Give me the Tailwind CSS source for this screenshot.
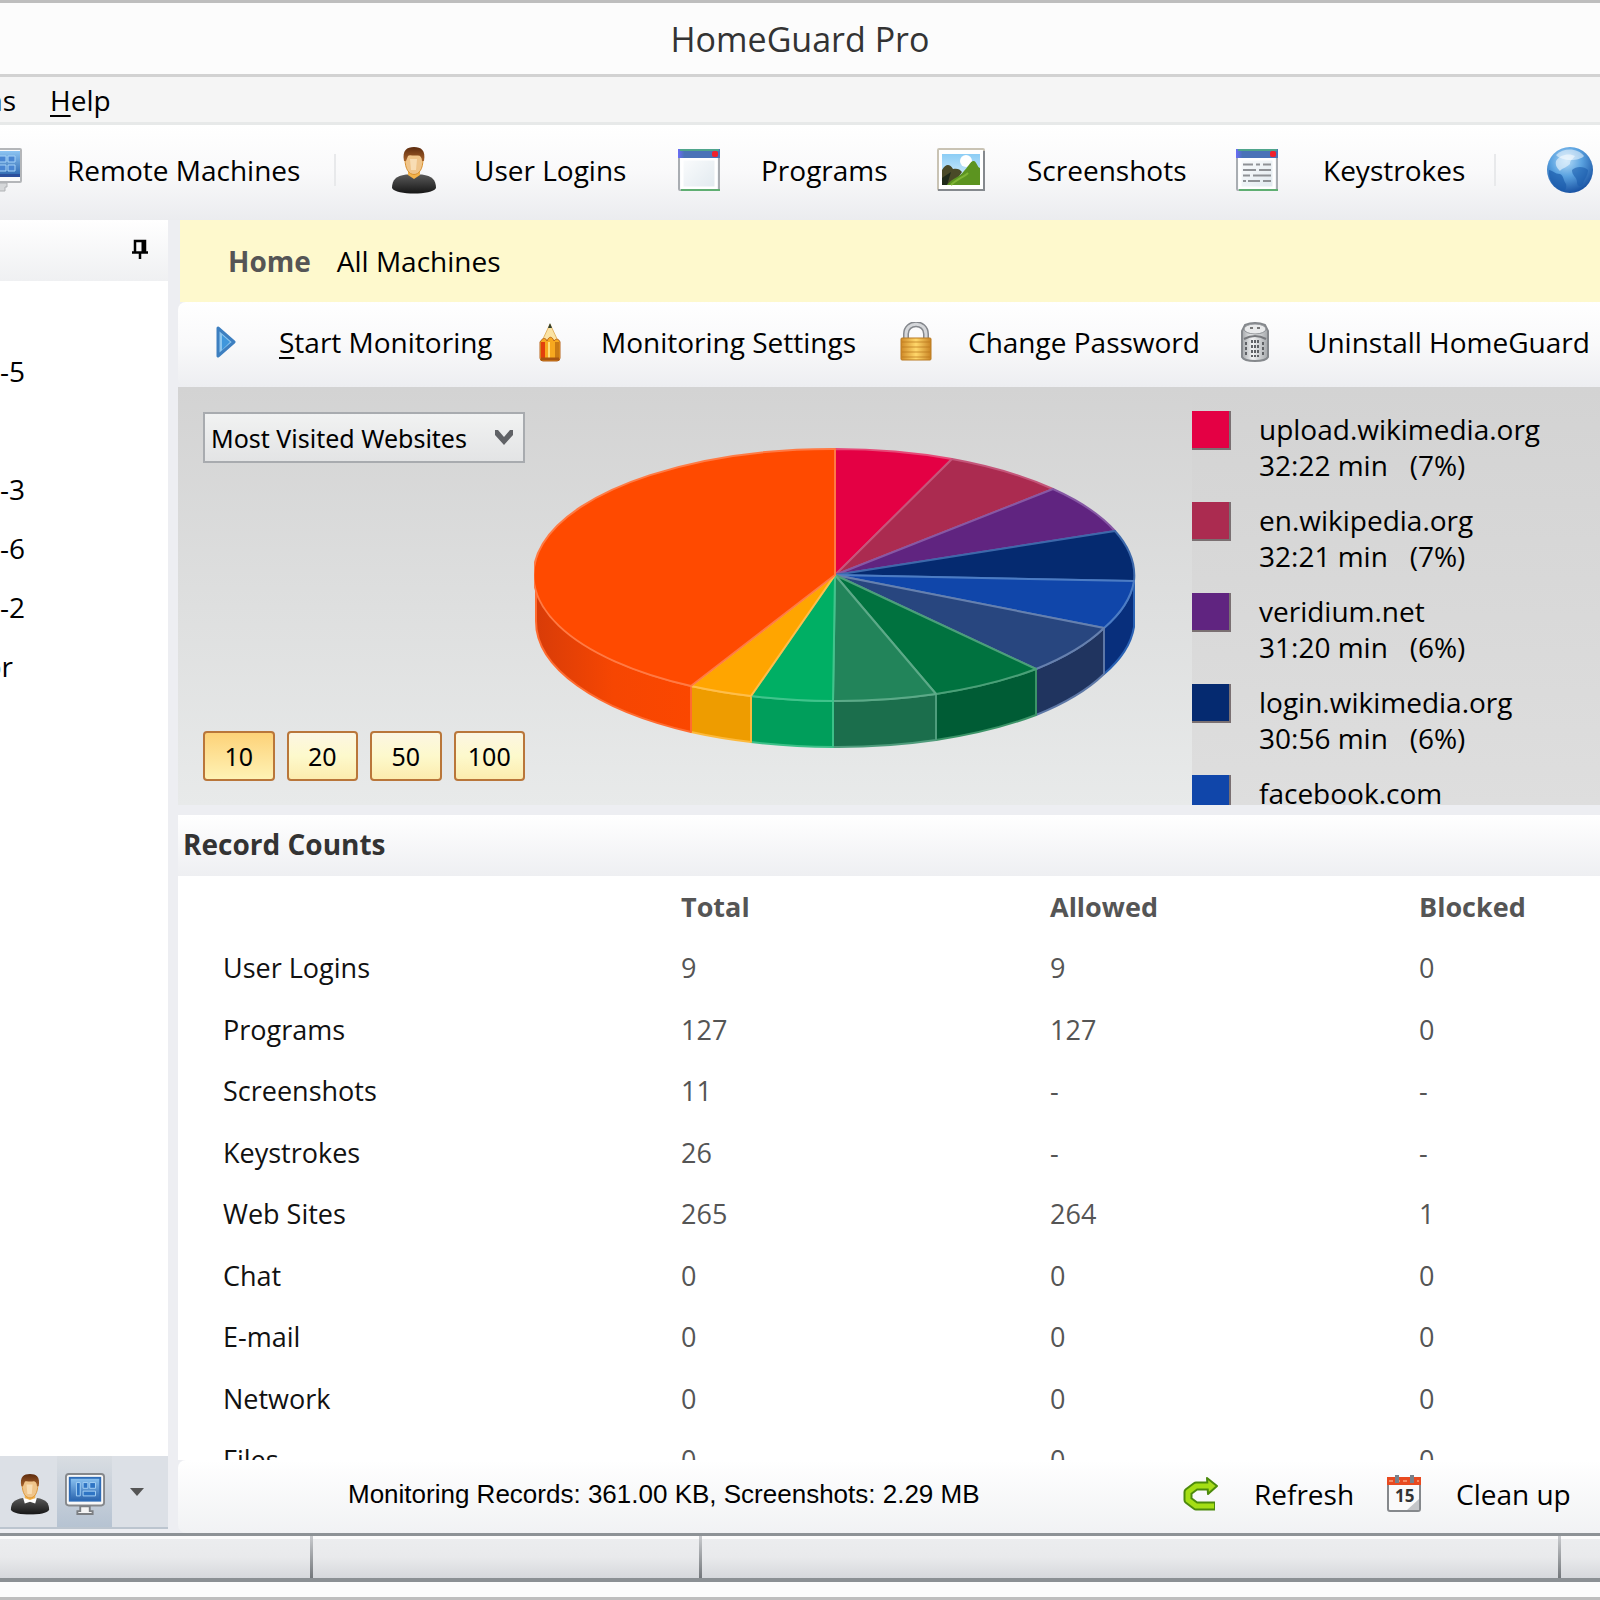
<!DOCTYPE html>
<html lang="en">
  <head>
    <meta charset="UTF-8" />
    <meta name="viewport" content="width=device-width, initial-scale=1.0" />
    <title>HomeGuard Pro</title>
    <script src="https://cdn.jsdelivr.net/npm/@tailwindcss/browser@4"></script>
  </head>
  <body class="bg-[#fcfcfc]">
    <!-- Shared icon shapes -->
    <svg class="absolute size-0" aria-hidden="true">
      <defs>
        <linearGradient id="hair" x1="0" y1="0" x2="0" y2="1">
          <stop offset="0" stop-color="#5c2b0e" />
          <stop offset="1" stop-color="#a8622a" />
        </linearGradient>
        <linearGradient id="suit" x1="0" y1="0" x2="0" y2="1">
          <stop offset="0" stop-color="#5a5a5a" />
          <stop offset="1" stop-color="#161616" />
        </linearGradient>
        <linearGradient id="screen" x1="0" y1="0" x2="0" y2="1">
          <stop offset="0" stop-color="#8cc4f2" />
          <stop offset="1" stop-color="#2a64ae" />
        </linearGradient>
        <linearGradient id="paper" x1="0" y1="0" x2="1" y2="1">
          <stop offset="0" stop-color="#ffffff" />
          <stop offset="1" stop-color="#dfe8ee" />
        </linearGradient>
        <linearGradient id="titlebar" x1="0" y1="0" x2="1" y2="0">
          <stop offset="0" stop-color="#6a6cf6" />
          <stop offset="0.15" stop-color="#4a72b8" />
          <stop offset="1" stop-color="#4a72b8" />
        </linearGradient>
        <radialGradient id="globe" cx="0.42" cy="0.3" r="0.75">
          <stop offset="0" stop-color="#b5dcf8" />
          <stop offset="0.45" stop-color="#5aa2e0" />
          <stop offset="1" stop-color="#11499c" />
        </radialGradient>
        <linearGradient id="gold" x1="0" y1="0" x2="1" y2="0">
          <stop offset="0" stop-color="#d08a28" />
          <stop offset="0.5" stop-color="#ffd76a" />
          <stop offset="1" stop-color="#c98424" />
        </linearGradient>
        <linearGradient id="steel" x1="0" y1="0" x2="1" y2="0">
          <stop offset="0" stop-color="#a4a7aa" />
          <stop offset="0.4" stop-color="#f2f3f4" />
          <stop offset="1" stop-color="#a4a7aa" />
        </linearGradient>
        <linearGradient id="sky" x1="0" y1="0" x2="0" y2="1">
          <stop offset="0" stop-color="#8ccdf5" />
          <stop offset="1" stop-color="#e4f5fd" />
        </linearGradient>
        <linearGradient id="rim" x1="0" y1="0" x2="1" y2="0">
          <stop offset="0" stop-color="#d83c08" />
          <stop offset="0.5" stop-color="#f64602" />
          <stop offset="1" stop-color="#fb4700" />
        </linearGradient>
        <symbol id="user" viewBox="0 0 46 48">
          <path d="M1 42 C1 34 5 30 15 28.500 L31 28.500 C41 30 45 34 45 42 C43 46 33 47.500 23 47.500 C13 47.500 3 46 1 42 Z" fill="url(#suit)" />
          <path d="M17 24 h12 v5 l-6 4 l-6 -4 Z" fill="#f3b24a" />
          <path d="M14 13 C14 23 18 28.500 23 28.500 C28 28.500 32 23 32 13 L29 7 L17 7 Z" fill="#efc48a" stroke="#d9912f" stroke-width="1" />
          <path d="M19 13 h7 l-1 11 h-5 Z" fill="#f8ddb4" />
          <path d="M13 15 C11 4 16 1 23 1 C30 1 35 4 33 15 L31 15 C31 11 29 9 26 9.500 C22 10 18 8.500 17 10 L15 15 Z" fill="url(#hair)" />
        </symbol>
        <symbol id="monitor" viewBox="0 0 42 44">
          <rect x="1" y="1" width="40" height="33" rx="3" fill="#f8f8f8" stroke="#85888c" stroke-width="2" />
          <rect x="5" y="5" width="32" height="24" fill="url(#screen)" stroke="#2f6db8" stroke-width="2" />
          <path d="M12 10 h4 v14 h-4 Z M19 10 h5 v6 h-5 Z M26 10 h6 v6 h-6 Z M19 19 h13 v5 h-13 Z" fill="#2e74c4" stroke="#a6d3f7" stroke-width="1" />
          <path d="M16 35 h10 v5 h3 v3 h-16 v-3 h3 Z" fill="#f4f4f4" stroke="#7c7f83" stroke-width="2" />
        </symbol>
        <!-- same monitor with a lighter frame and four tiles -->
        <symbol id="monitor-light" viewBox="0 0 42 44">
          <rect x="1" y="1" width="40" height="33" rx="1" fill="#fafafa" stroke="#b4b6b9" stroke-width="2" />
          <rect x="2" y="3" width="38" height="26" fill="url(#screen)" />
          <rect x="2" y="26" width="38" height="3" fill="#2c4f9c" />
          <path d="M8 8 h7 v16 h-7 Z M19 8 h7 v6 h-7 Z M28 8 h7 v6 h-7 Z M19 17 h7 v6 h-7 Z M28 17 h7 v6 h-7 Z" fill="#4a86d2" stroke="#a6d3f7" stroke-width="1" />
          <path d="M17 35 h10 v4 h-2 v4 h-12 v-4 h4 Z" fill="#d6d8da" stroke="#b0b2b5" stroke-width="1" />
        </symbol>
        <symbol id="window" viewBox="0 0 42 44">
          <rect x="1" y="3" width="40" height="39" rx="1" fill="url(#paper)" stroke="#a9adb2" stroke-width="2" />
          <rect x="4" y="11" width="34" height="29" fill="none" stroke="#fff" stroke-width="3" />
          <rect x="0" y="1" width="42" height="9" fill="url(#titlebar)" />
          <rect x="2" y="1" width="39" height="2" fill="#4fa58c" />
          <rect x="3" y="41" width="39" height="2" fill="#5fae72" />
          <rect x="34" y="3" width="6" height="6" rx="2" fill="#f2202c" />
        </symbol>
      </defs>
    </svg>

    <div class="flex h-screen flex-col overflow-hidden border-y-[3px] border-[#bebebe] font-['Open_Sans','Noto_Sans',sans-serif] text-[28px] leading-9 text-black">
      <!-- Title bar -->
      <header class="flex h-[74px] shrink-0 items-center justify-center border-b-[3px] border-[#d2d2d2]">
        <h1 class="text-[34px] text-[#333]">HomeGuard Pro</h1>
      </header>

      <!-- Menu -->
      <nav class="flex h-12 shrink-0 items-center gap-[34px] border-b-[3px] border-[#e7e9e9] bg-[#f5f5f5]">
        <button class="flex w-4 justify-end overflow-hidden">ns</button>
        <button><u class="underline decoration-2 underline-offset-4">H</u>elp</button>
      </nav>

      <!-- Toolbar -->
      <nav class="flex h-[95px] shrink-0 items-center overflow-hidden bg-linear-to-b from-white via-[#f9f9fa] to-[#ebecef] pb-[6px] whitespace-nowrap">
        <button class="flex w-[334px] shrink-0 items-center gap-[45px]">
          <span class="flex w-[22px] justify-end overflow-hidden"><svg class="h-11 w-[42px] shrink-0"><use href="#monitor-light" /></svg></span>
          Remote Machines
        </button>
        <div class="mr-[54px] h-8 w-[2px] shrink-0 bg-[#e8e9eb]"></div>
        <button class="flex w-[285px] shrink-0 items-center gap-9">
          <span class="flex w-12 justify-center"><svg class="h-12 w-[46px]"><use href="#user" /></svg></span>
          User Logins
        </button>
        <button class="flex w-[262px] shrink-0 items-center gap-[38px]">
          <span class="flex w-12 justify-center"><svg class="h-11 w-[42px]"><use href="#window" /></svg></span>
          Programs
        </button>
        <button class="flex w-[296px] shrink-0 items-center gap-[42px]">
          <svg class="h-11 w-12" viewBox="0 0 48 44">
            <rect x="1" y="1" width="46" height="41" rx="1" fill="#fff" stroke="#c9c3b4" stroke-width="2" />
            <path d="M1 42 H47 V3" fill="none" stroke="#85898e" stroke-width="2" />
            <rect x="5" y="6" width="38" height="31" fill="url(#sky)" />
            <circle cx="29" cy="13" r="6" fill="#fff" />
            <path d="M5 22 C9 15 13 16 16 21 C20 20 23 21 25 24 L16 37 H5 Z" fill="#4a4a28" />
            <path d="M5 30 L14 24 L10 37 H5 Z" fill="#1f2a1a" />
            <path d="M10 37 C16 29 22 30 27 23 C31 19 34 12 37 13 C40 14 40 19 43 20 V37 Z" fill="#5c9420" />
            <path d="M14 37 C20 31 27 29 31 25" fill="none" stroke="#7fb535" stroke-width="2" />
          </svg>
          Screenshots
        </button>
        <button class="flex w-[261px] shrink-0 items-center gap-[42px]">
          <span class="flex w-12 justify-center">
            <svg class="h-11 w-[42px]" viewBox="0 0 42 44">
              <use href="#window" />
              <path d="M7 16.500 h10 m3 0 h4 m3 0 h8 M7 22 h13 m3 0 h12 M7 27.500 h7 m3 0 h18 M7 33 h3 m2 0 h12 m3 0 h8" stroke="#8f9296" stroke-width="2" />
            </svg>
          </span>
          Keystrokes
        </button>
        <div class="mr-[50px] h-8 w-[2px] shrink-0 bg-[#e8e9eb]"></div>
        <button class="shrink-0" aria-label="Web">
          <svg class="h-12 w-12" viewBox="0 0 48 48">
            <circle cx="24" cy="24" r="23" fill="url(#globe)" />
            <path d="M3 24 C6 24 9 28 14 28 C18 30 17 34 20 38 C21 42 19 45 17 45 C8 42 2 34 3 24 Z" fill="#1b5cac" opacity="0.7" />
            <path d="M26 24 C30 20 38 20 42 24 C42 30 38 33 37 38 C34 42 31 40 31 36 C31 31 26 30 26 24 Z" fill="#1b5cac" opacity="0.6" />
            <path d="M10 15 C14 8 24 7 29 10 C26 14 24 14 24 18 C20 22 16 22 14 25 C11 22 9 19 10 15 Z" fill="#e6f3fc" opacity="0.65" />
            <path d="M10 9 C18 1 32 2 38 10 C34 15 16 16 10 9 Z" fill="#fff" opacity="0.5" />
          </svg>
        </button>
      </nav>

      <div class="flex min-h-0 flex-1 bg-[#edeef2]">
        <!-- Machines pane -->
        <aside class="mb-1 flex w-[168px] shrink-0 flex-col bg-white">
          <div class="flex h-[61px] items-center justify-end bg-linear-to-b from-white to-[#eff0f2] pr-[19px] pb-1">
            <button aria-label="Pin">
              <svg class="h-6 w-[18px]" viewBox="0 0 18 24">
                <path d="M4 15 V4 H14 V15 M1 15.500 H17 M9 16 V22" fill="none" stroke="#000" stroke-width="2.500" />
                <path d="M12 3 V15" stroke="#000" stroke-width="3" />
              </svg>
            </button>
          </div>
          <ul class="flex-1 pt-[61px] leading-[59px]">
            <li>-5</li>
            <li class="h-[59px]"></li>
            <li>-3</li>
            <li>-6</li>
            <li>-2</li>
            <li class="flex w-[13px] justify-end overflow-hidden">or</li>
          </ul>
          <div class="flex h-[73px] items-center border-b-2 border-[#bcc5cf] bg-[#dce0e6]">
            <button class="flex w-[57px] justify-end pt-1 pr-[7px]" aria-label="Users">
              <svg class="h-[42px] w-10" viewBox="0 0 46 48">
                <use href="#user" />
                <path d="M15 28 L23 31 L31 28 L29 35 L23 33 L17 35 Z" fill="#fff" />
              </svg>
            </button>
            <button class="flex h-full w-[55px] items-center justify-center bg-linear-to-b from-[#d9dde2] to-[#b6c3d2] pt-1" aria-label="Machines"><svg class="h-[42px] w-10"><use href="#monitor" /></svg></button>
            <button class="flex w-[50px] justify-center" aria-label="More">
              <svg class="h-2 w-[14px]" viewBox="0 0 14 8"><path d="M0 0 H14 L7 8 Z" fill="#555" /></svg>
            </button>
          </div>
        </aside>

        <main class="ml-[10px] flex min-w-0 flex-1 flex-col">
          <div class="ml-[2px] flex h-[82px] shrink-0 items-center gap-[26px] bg-[#fef9cd] pl-12">
            <h2 class="font-bold text-[#555]">Home</h2>
            <span>All Machines</span>
          </div>

          <!-- Actions -->
          <div class="flex h-[85px] shrink-0 items-center overflow-hidden rounded-l-lg bg-linear-to-b from-white via-[#f9f9fa] to-[#edeef1] pb-[6px] whitespace-nowrap">
            <button class="flex w-[355px] shrink-0 items-center gap-[43px] pl-[38px]">
              <svg class="h-8 w-5" viewBox="0 0 20 32">
                <path d="M2 2 L18 16 L2 30 Z" fill="#8cc6ee" stroke="#3d7fc0" stroke-width="3" stroke-linejoin="round" />
                <path d="M6 9 L14 16 L6 24 Z" fill="#3f97dc" />
              </svg>
              <span><u class="underline decoration-2 underline-offset-4">S</u>tart Monitoring</span>
            </button>
            <button class="flex w-[363px] shrink-0 items-center gap-10 pl-[6px]">
              <svg class="h-10 w-[22px]" viewBox="0 0 22 40">
                <path d="M11 2 L19 19 H3 Z" fill="#fbe3a4" stroke="#e2b566" stroke-width="1" />
                <path d="M11 1 L13 6 H9 Z" fill="#33402e" />
                <path d="M1 20 C4 15 7 16 8 19 C10 14 13 14 15 19 C17 16 20 17 21 20 V36 Q21 39 18 39 H4 Q1 39 1 36 Z" fill="#f7a81f" stroke="#b8641a" stroke-width="1" />
                <rect x="2" y="20" width="4" height="17" fill="#e2400c" />
                <rect x="9" y="20" width="2" height="17" fill="#ffdf7c" />
                <rect x="16" y="20" width="4" height="17" fill="#c97a14" />
                <path d="M2 37 H20" stroke="#a65412" stroke-width="3" />
              </svg>
              Monitoring Settings
            </button>
            <button class="flex w-[341px] shrink-0 items-center gap-9 pl-1">
              <svg class="h-10 w-8" viewBox="0 0 32 40">
                <path d="M6 19 V12 C6 -1 26 -1 26 12 V19" fill="none" stroke="#85888d" stroke-width="6" />
                <path d="M6 19 V12 C6 -1 26 -1 26 12 V19" fill="none" stroke="#d5d7da" stroke-width="3" />
                <rect x="1" y="16" width="30" height="22" rx="1" fill="url(#gold)" stroke="#b97a22" stroke-width="1" />
                <path d="M2 20 H30 M2 25 H30 M2 30 H30 M2 35 H30" stroke="#b9761c" stroke-width="1" opacity="0.7" />
              </svg>
              Change Password
            </button>
            <button class="flex shrink-0 items-center gap-[38px] pl-1">
              <svg class="h-10 w-7" viewBox="0 0 28 40">
                <path d="M4 3 Q14 -1 24 3 L27 9 V35 Q25 39 14 39 Q3 39 1 35 V9 Z" fill="url(#steel)" stroke="#85888c" stroke-width="2" />
                <ellipse cx="14" cy="7" rx="11" ry="5" fill="#e9eaeb" stroke="#8e9195" stroke-width="1" />
                <path d="M9 6 h3 M16 6 h3" stroke="#777" stroke-width="2" />
                <path d="M3 17 Q14 11 25 17" fill="none" stroke="#77797d" stroke-width="2" />
                <path d="M11 18 V35 M14 18 V35 M17 18 V35 M5 20 V34 M22 20 V34" stroke="#606266" stroke-width="2" stroke-dasharray="3 2" />
              </svg>
              Uninstall HomeGuard
            </button>
          </div>

          <!-- Chart -->
          <section class="flex h-[418px] shrink-0 bg-linear-to-b from-[#d3d3d3] to-[#e8eaea]">
            <div class="flex w-[347px] shrink-0 flex-col justify-between pt-[25px] pb-6 pl-[25px]">
              <div class="relative">
                <label for="chart" class="sr-only">Chart</label>
                <select id="chart" class="h-[51px] w-full appearance-none border-2 border-[#a8abaf] bg-linear-to-b from-[#f1f2f2] to-[#e3e4e5] pl-[6px] font-['Noto_Sans',sans-serif] text-[25px] leading-9">
                  <option>Most Visited Websites</option>
                </select>
                <svg class="pointer-events-none absolute top-[18px] right-3 h-[15px] w-[18px]" viewBox="0 0 18 15"><path d="M0 0 L3 0 L9 7 L15 0 L18 0 L18 5 L9 15 L0 5 Z" fill="#606266" /></svg>
              </div>
              <div class="grid grid-cols-4 gap-3 font-['Noto_Sans',sans-serif] text-[25px]">
                <button class="h-[50px] rounded border-2 border-[#b9763a] bg-linear-to-b from-[#fdd278] to-[#fef2b4]">10</button>
                <button class="h-[50px] rounded border-2 border-[#b9763a] bg-linear-to-b from-[#fcf6e2] via-[#fdf9cc] to-[#fcecae]">20</button>
                <button class="h-[50px] rounded border-2 border-[#b9763a] bg-linear-to-b from-[#fcf6e2] via-[#fdf9cc] to-[#fcecae]">50</button>
                <button class="h-[50px] rounded border-2 border-[#b9763a] bg-linear-to-b from-[#fcf6e2] via-[#fdf9cc] to-[#fcecae]">100</button>
              </div>
            </div>
            <div class="flex min-w-0 flex-1 items-start pt-[60px] pl-[9px]">
              <svg class="h-[302px] w-[602px] shrink-0" viewBox="534 447 602 302" stroke-width="2" stroke-linejoin="round" role="img" aria-label="Most visited websites">
                <!-- rim -->
                <path d="M1134 581 A299 126 0 0 1 1104 628 V674 A299 126 0 0 0 1134 627 Z" fill="#082f7c" stroke="#2a62b4" />
                <path d="M1104 628 A299 126 0 0 1 1036 669 V715 A299 126 0 0 0 1104 674 Z" fill="#20345f" stroke="#5d77a6" />
                <path d="M1036 669 A299 126 0 0 1 936 694 V740 A299 126 0 0 0 1036 715 Z" fill="#005c35" stroke="#3c9468" />
                <path d="M936 694 A299 126 0 0 1 833 701 V747 A299 126 0 0 0 936 740 Z" fill="#1b6e4c" stroke="#4f9c7c" />
                <path d="M833 701 A299 126 0 0 1 751 696 V742 A299 126 0 0 0 833 747 Z" fill="#009e5b" stroke="#3cc088" />
                <path d="M751 696 A299 126 0 0 1 691 686 V732 A299 126 0 0 0 751 742 Z" fill="#ee9c00" stroke="#fcb93c" />
                <path d="M691 686 A299 126 0 0 1 536 575 V621 A299 126 0 0 0 691 732 Z" fill="url(#rim)" stroke="#ff6b30" />
                <!-- slices -->
                <path d="M835 575 V449 A299 126 0 0 1 952 459 Z" fill="#e40044" stroke="#e64a78" />
                <path d="M835 575 L952 459 A299 126 0 0 1 1053 489 Z" fill="#ab2b50" stroke="#c4567a" />
                <path d="M835 575 L1053 489 A299 126 0 0 1 1115 531 Z" fill="#602480" stroke="#8658a4" />
                <path d="M835 575 L1115 531 A299 126 0 0 1 1134 581 Z" fill="#052a70" stroke="#3c68aa" />
                <path d="M835 575 L1134 581 A299 126 0 0 1 1104 628 Z" fill="#1046aa" stroke="#4c7cc4" />
                <path d="M835 575 L1104 628 A299 126 0 0 1 1036 669 Z" fill="#28467f" stroke="#6680ae" />
                <path d="M835 575 L1036 669 A299 126 0 0 1 936 694 Z" fill="#00723f" stroke="#4aa078" />
                <path d="M835 575 L936 694 A299 126 0 0 1 833 701 Z" fill="#22845a" stroke="#5caa88" />
                <path d="M835 575 L833 701 A299 126 0 0 1 751 696 Z" fill="#00af64" stroke="#40c48c" />
                <path d="M835 575 L751 696 A299 126 0 0 1 691 686 Z" fill="#ffa500" stroke="#ffbe4a" />
                <path d="M835 575 L691 686 A299 126 0 0 1 835 449 Z" fill="#ff4a00" stroke="#ff7a44" />
              </svg>
            </div>
            <ul class="w-[408px] shrink-0 overflow-hidden bg-linear-to-b from-[#d3d3d3] to-[#dedede] pt-6">
              <li class="mb-[19px] flex h-[72px] gap-7"><span class="size-[39px] border-r-2 border-b-2 border-[#7a7072] bg-[#e40044]"></span><p class="whitespace-pre">upload.wikimedia.org<br />32:22 min   (7%)</p></li>
              <li class="mb-[19px] flex h-[72px] gap-7"><span class="size-[39px] border-r-2 border-b-2 border-[#7a7072] bg-[#ab2b50]"></span><p class="whitespace-pre">en.wikipedia.org<br />32:21 min   (7%)</p></li>
              <li class="mb-[19px] flex h-[72px] gap-7"><span class="size-[39px] border-r-2 border-b-2 border-[#7a7072] bg-[#602480]"></span><p class="whitespace-pre">veridium.net<br />31:20 min   (6%)</p></li>
              <li class="mb-[19px] flex h-[72px] gap-7"><span class="size-[39px] border-r-2 border-b-2 border-[#7a7072] bg-[#052a70]"></span><p class="whitespace-pre">login.wikimedia.org<br />30:56 min   (6%)</p></li>
              <li class="flex h-[72px] gap-7"><span class="size-[39px] border-r-2 border-b-2 border-[#7a7072] bg-[#1046aa]"></span><p>facebook.com</p></li>
            </ul>
          </section>

          <!-- Record counts -->
          <h2 class="mt-[10px] flex h-[61px] shrink-0 items-center bg-linear-to-b from-white to-[#eeeff2] pb-1 pl-[5px] font-bold text-[#333]">Record Counts</h2>
          <div class="min-h-0 flex-1 overflow-hidden bg-white">
            <table class="h-[615px] w-full table-fixed text-left text-[27px] text-[#555]">
              <colgroup>
                <col class="w-[503px]" />
                <col class="w-[369px]" />
                <col class="w-[369px]" />
                <col />
              </colgroup>
              <tbody>
                <tr class="h-[61px]"><td></td><th>Total</th><th>Allowed</th><th>Blocked</th></tr>
                <tr class="h-[61px]"><th class="pl-[45px] font-normal text-[#111]">User Logins</th><td>9</td><td>9</td><td>0</td></tr>
                <tr class="h-[61px]"><th class="pl-[45px] font-normal text-[#111]">Programs</th><td>127</td><td>127</td><td>0</td></tr>
                <tr class="h-[61px]"><th class="pl-[45px] font-normal text-[#111]">Screenshots</th><td>11</td><td>-</td><td>-</td></tr>
                <tr class="h-[61px]"><th class="pl-[45px] font-normal text-[#111]">Keystrokes</th><td>26</td><td>-</td><td>-</td></tr>
                <tr class="h-[61px]"><th class="pl-[45px] font-normal text-[#111]">Web Sites</th><td>265</td><td>264</td><td>1</td></tr>
                <tr class="h-[61px]"><th class="pl-[45px] font-normal text-[#111]">Chat</th><td>0</td><td>0</td><td>0</td></tr>
                <tr class="h-[61px]"><th class="pl-[45px] font-normal text-[#111]">E-mail</th><td>0</td><td>0</td><td>0</td></tr>
                <tr class="h-[61px]"><th class="pl-[45px] font-normal text-[#111]">Network</th><td>0</td><td>0</td><td>0</td></tr>
                <tr class="h-[61px]"><th class="pl-[45px] font-normal text-[#111]">Files</th><td>0</td><td>0</td><td>0</td></tr>
              </tbody>
            </table>
          </div>

          <div class="flex h-[73px] shrink-0 items-center rounded-l-lg bg-linear-to-b from-white to-[#f1f2f4] pb-[6px] whitespace-nowrap">
            <p class="flex-1 pl-[170px] font-['Liberation_Sans',sans-serif] text-[26px]">Monitoring Records: 361.00 KB, Screenshots: 2.29 MB</p>
            <button class="flex w-[205px] items-center gap-9">
              <svg class="h-9 w-9" viewBox="0 0 36 36">
                <path d="M33 30 H14 L6 24 V16 L14 10 H25" fill="none" stroke="#4c8a0c" stroke-width="9" stroke-linejoin="round" />
                <path d="M25 2 L35 10 L26 18 Z" fill="#a8dc1c" stroke="#4c8a0c" stroke-width="2" stroke-linejoin="round" />
                <path d="M32 30 H14 L6 24 V16 L14 10 H28" fill="none" stroke="#a4de14" stroke-width="5" stroke-linejoin="round" />
              </svg>
              Refresh
            </button>
            <button class="flex w-[213px] items-center gap-[35px]">
              <svg class="h-[38px] w-[34px]" viewBox="0 0 34 38">
                <rect x="1" y="4" width="32" height="32" rx="2" fill="#fafafa" stroke="#85888c" stroke-width="2" />
                <rect x="0" y="2" width="34" height="8" fill="#e84a20" />
                <path d="M2 6 H32" stroke="#f58a64" stroke-width="2" stroke-dasharray="4 3" />
                <path d="M10 0 V8 M25 0 V8" stroke="#77808a" stroke-width="4" />
                <path d="M20 35 L32 24 V35 Z" fill="#c4c6c9" />
                <text x="8" y="27" font-size="17" font-weight="bold" fill="#333">15</text>
              </svg>
              Clean up
            </button>
          </div>
        </main>
      </div>

      <!-- Status bar -->
      <footer class="mb-[15px] flex h-[49px] shrink-0 justify-between border-t-[3px] border-b-4 border-t-[#8d9296] border-b-[#8b9094] bg-linear-to-b from-[#ecedef] via-[#e9eaec] to-[#d6d8dc] shadow-[inset_0_3px_0_#fbfbfb]">
        <div class="flex w-[313px] justify-end"><i class="w-[3px] bg-linear-to-b from-[#c8cacd] to-[#74787c]"></i></div>
        <div class="flex w-[389px] justify-end"><i class="w-[3px] bg-linear-to-b from-[#c8cacd] to-[#74787c]"></i></div>
        <div class="mr-[39px] flex flex-1 justify-end"><i class="w-[3px] bg-linear-to-b from-[#c8cacd] to-[#74787c]"></i></div>
      </footer>
    </div>
  </body>
</html>
